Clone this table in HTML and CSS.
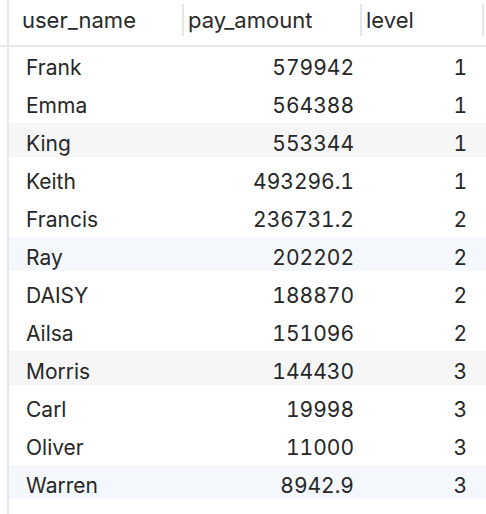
FILE: index.html
```html
<!DOCTYPE html>
<html>
<head>
<meta charset="utf-8">
<link rel="stylesheet" href="styles.css">
</head>
<body>
<div class="grid">
  <div class="head">
    <div class="hc c1">user_name</div>
    <div class="hc c2">pay_amount</div>
    <div class="hc c3">level</div>
  </div>
  <div class="row"><div class="c1">Frank</div><div class="c2">579942</div><div class="c3">1</div></div>
  <div class="row"><div class="c1">Emma</div><div class="c2">564388</div><div class="c3">1</div></div>
  <div class="row gray"><div class="c1">King</div><div class="c2">553344</div><div class="c3">1</div></div>
  <div class="row"><div class="c1">Keith</div><div class="c2">493296.1</div><div class="c3">1</div></div>
  <div class="row"><div class="c1">Francis</div><div class="c2">236731.2</div><div class="c3">2</div></div>
  <div class="row blue"><div class="c1">Ray</div><div class="c2">202202</div><div class="c3">2</div></div>
  <div class="row"><div class="c1">DAISY</div><div class="c2">188870</div><div class="c3">2</div></div>
  <div class="row"><div class="c1">Ailsa</div><div class="c2">151096</div><div class="c3">2</div></div>
  <div class="row gray"><div class="c1">Morris</div><div class="c2">144430</div><div class="c3">3</div></div>
  <div class="row"><div class="c1">Carl</div><div class="c2">19998</div><div class="c3">3</div></div>
  <div class="row"><div class="c1">Oliver</div><div class="c2">11000</div><div class="c3">3</div></div>
  <div class="row blue"><div class="c1">Warren</div><div class="c2">8942.9</div><div class="c3">3</div></div>
</div>
</body>
</html>
```
FILE: styles.css
```css
html, body {
  margin: 0;
  padding: 0;
  background: #ffffff;
}
body {
  font-family: Inter, "Liberation Sans", sans-serif;
  font-size: 21px;
  color: #262626;
  height: 514px;
  overflow: hidden;
}
.grid {
  margin-left: 7px;
  border-left: 2px solid #e6e6e6;
  min-height: 514px;
}
.head {
  display: grid;
  grid-template-columns: 175px 178px 122px;
  height: 45px;
  border-bottom: 2px solid #e8e8e8;
  margin-left: -9px;
  padding-left: 9px;
  font-size: 22px;
}
.hc {
  position: relative;
  line-height: 40px;
  color: #2a2a2a;
}
.hc::after {
  content: "";
  position: absolute;
  right: 0;
  top: 4px;
  height: 32px;
  width: 2px;
  background: #e6e6e6;
}
.hc.c1 { padding-left: 13px; }
.hc.c2 { padding-left: 4px; }
.hc.c3 { padding-left: 4px; }
.row {
  display: grid;
  grid-template-columns: 175px 178px 122px;
  height: 38px;
}
.row > div {
  padding-top: 4px;
  line-height: 34px;
  font-variant-numeric: tabular-nums;
}
.row.gray { background: linear-gradient(#f6f6f6, #f6f6f6) top / 100% 34px no-repeat; }
.row.blue { background: linear-gradient(#f4f7fb, #f4f7fb) top / 100% 34px no-repeat; }
.row .c1 { padding-left: 17px; }
.row .c2 { text-align: right; padding-right: 8px; }
.row .c3 { text-align: right; padding-right: 17px; }
```
